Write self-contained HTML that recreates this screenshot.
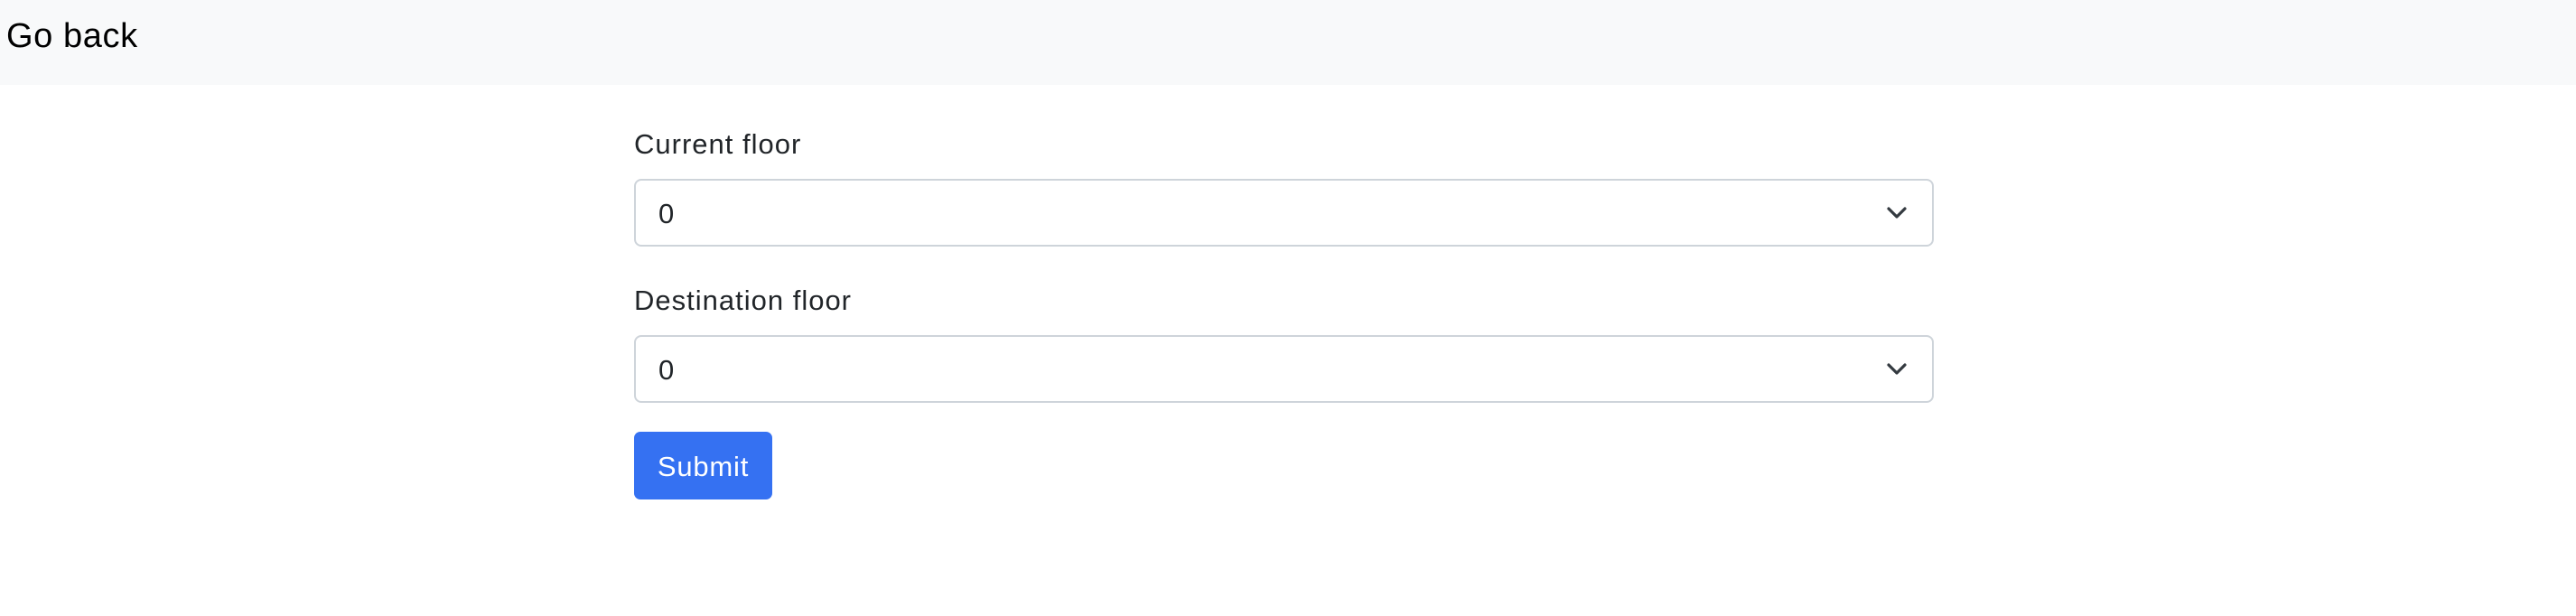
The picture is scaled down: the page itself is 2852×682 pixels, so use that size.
<!DOCTYPE html>
<html><head><meta charset="utf-8"><style>
html,body{margin:0;padding:0;width:2852px;height:682px;background:#fff;overflow:hidden;font-family:"Liberation Sans",Arial,sans-serif;color:#212529;}
.nav{position:absolute;left:0;top:0;width:2852px;height:94px;background:#f8f9fa;}
.brand{position:absolute;left:7px;top:18px;font-size:38px;line-height:44px;color:#000;letter-spacing:0.6px;}
.lbl{position:absolute;left:702px;font-size:31px;line-height:36px;letter-spacing:1px;}
.sel{position:absolute;left:702px;width:1435px;height:71px;border:2px solid #ced4da;border-radius:8px;box-sizing:content-box;}
.sel span{position:absolute;left:25px;top:19px;font-size:31px;line-height:36px;}
.sel svg{position:absolute;left:1385px;top:28px;}
.btn{position:absolute;left:702px;top:478px;width:153px;height:75px;background:#3571f2;border-radius:7px;color:#fff;font-size:31px;line-height:78px;text-align:center;letter-spacing:0.8px;}
</style></head><body>
<div class="nav"><div class="brand">Go back</div></div>
<div class="lbl" style="top:142px">Current floor</div>
<div class="sel" style="top:198px"><span>0</span><svg width="22" height="16" viewBox="0 0 22 16"><path d="M2 3l9 9 9-9" fill="none" stroke="#343a40" stroke-width="3.2" stroke-linecap="round" stroke-linejoin="round"/></svg></div>
<div class="lbl" style="top:315px">Destination floor</div>
<div class="sel" style="top:371px"><span>0</span><svg width="22" height="16" viewBox="0 0 22 16"><path d="M2 3l9 9 9-9" fill="none" stroke="#343a40" stroke-width="3.2" stroke-linecap="round" stroke-linejoin="round"/></svg></div>
<div class="btn">Submit</div>
</body></html>
